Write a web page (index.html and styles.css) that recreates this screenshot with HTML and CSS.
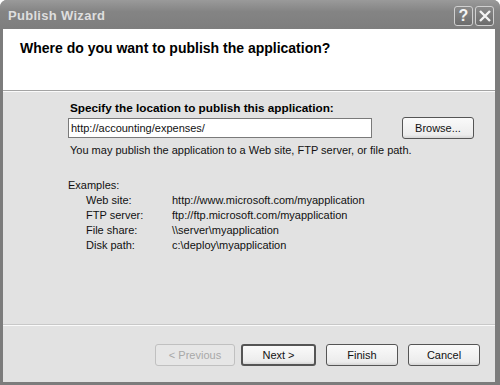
FILE: index.html
```html
<!DOCTYPE html>
<html>
<head>
	<title>Publish Wizard</title>
	<link rel="stylesheet" href="styles.css">
</head>
<body>
<div class="window">
	<div class="titlebar">
		<span class="title">Publish Wizard</span>
		<div class="caption-buttons">
			<span class="cap-btn">?</span>
			<span class="cap-btn">
				<svg width="14" height="14" viewBox="0 0 14 14">
					<path d="M2,2 L12,12 M12,2 L2,12" stroke="#f4f4f4" stroke-width="2.4" fill="none"></path>
				</svg>
			</span>
		</div>
	</div>
	<div class="frame">
		<div class="header">
			<h1>Where do you want to publish the application?</h1>
		</div>
		<div class="content">
			<div class="location">
				<label class="field-label">Specify the location to publish this application:</label>
				<div class="field-row">
					<div class="textbox">http://accounting/expenses/</div>
					<button class="btn browse">Browse...</button>
				</div>
				<p class="hint">You may publish the application to a Web site, FTP server, or file path.</p>
			</div>
			<div class="examples">
				<p>Examples:</p>
				<div class="example-grid">
					<span>Web site:</span><span>http://www.microsoft.com/myapplication</span>
					<span>FTP server:</span><span>ftp://ftp.microsoft.com/myapplication</span>
					<span>File share:</span><span>\\server\myapplication</span>
					<span>Disk path:</span><span>c:\deploy\myapplication</span>
				</div>
			</div>
		</div>
		<div class="footer">
			<button class="btn disabled">&lt; Previous</button>
			<button class="btn default">Next &gt;</button>
			<button class="btn">Finish</button>
			<button class="btn">Cancel</button>
		</div>
	</div>
</div>
</body>
</html>
```

FILE: styles.css
```css
body {
	margin: 0;
	padding: 0;
	background: #fff;
	font-family: "Liberation Sans", Arial, sans-serif;
	font-size: 11px;
	color: #111;
}

.window {
	width: 500px;
	height: 385px;
	box-sizing: border-box;
	display: flex;
	flex-direction: column;
	background: #7c7c7c;
	border-radius: 7px 7px 0 0;
	overflow: hidden;
}

.titlebar {
	height: 29px;
	flex: none;
	display: flex;
	align-items: center;
	justify-content: space-between;
	padding: 0 6px 0 8px;
	background: linear-gradient(#9a9a9a, #848484 40%, #7e7e7e);
}

.title {
	color: #dedede;
	font-weight: bold;
	font-size: 13px;
	letter-spacing: 0.3px;
	margin-top: 2px;
}

.caption-buttons {
	display: flex;
	gap: 2px;
	margin-top: 2px;
}

.cap-btn {
	width: 19px;
	height: 20px;
	box-sizing: border-box;
	border: 1px solid #d0d0d0;
	border-radius: 3px;
	background: linear-gradient(#8a8a8a, #6c6c6c);
	color: #f4f4f4;
	font-weight: bold;
	font-size: 16px;
	display: flex;
	align-items: center;
	justify-content: center;
}

.frame {
	flex: 1;
	display: flex;
	flex-direction: column;
	margin: 0 5px 3px 3px;
	background: #e2e2e2;
}

.header {
	height: 61px;
	flex: none;
	background: #fff;
	border-bottom: 1px solid #a4a4a4;
	box-shadow: 0 1px 0 #fbfbfb;
}

.header h1 {
	margin: 0;
	padding: 11px 0 0 17px;
	font-size: 14px;
	font-weight: bold;
	color: #000;
}

.content {
	flex: 1;
	padding: 10px 0 0 65px;
}

.field-label {
	display: block;
	font-weight: bold;
	font-size: 11.75px;
	padding-left: 2px;
	color: #000;
}

.field-row {
	display: flex;
	align-items: center;
	margin-top: 3px;
}

.textbox {
	width: 304px;
	height: 20px;
	box-sizing: border-box;
	border: 1px solid #7a7a7a;
	background: #fff;
	padding: 3px 0 0 2px;
}

.hint {
	margin: 5px 0 0 2px;
}

.examples {
	margin-top: 23px;
}

.examples p {
	margin: 0;
}

.example-grid {
	display: grid;
	grid-template-columns: 86px auto;
	row-gap: 3px;
	padding: 3px 0 0 18px;
}

.btn {
	font-family: "Liberation Sans", Arial, sans-serif;
	font-size: 11px;
	color: #111;
	height: 22px;
	box-sizing: border-box;
	border: 1px solid #555;
	border-radius: 3px;
	background: linear-gradient(#fafafa, #ececec 85%, #d6d6d6);
	padding: 0;
}

.browse {
	width: 72px;
	margin-left: 30px;
}

.footer {
	height: 57px;
	flex: none;
	display: flex;
	justify-content: flex-end;
	align-items: flex-start;
	gap: 10px;
	padding: 18px 15px 0 0;
	box-sizing: border-box;
	border-top: 1px solid #fafafa;
	box-shadow: 0 -1px 0 #c8c8c8;
}

.footer .btn {
	width: 72px;
}

.footer .btn.disabled {
	width: 80px;
	color: #a8a8a8;
	border-color: #c0c0c0;
	background: #e6e6e6;
	margin-right: -4px;
}

.footer .btn.default {
	width: 75px;
	border: 2px solid #555;
}
```
